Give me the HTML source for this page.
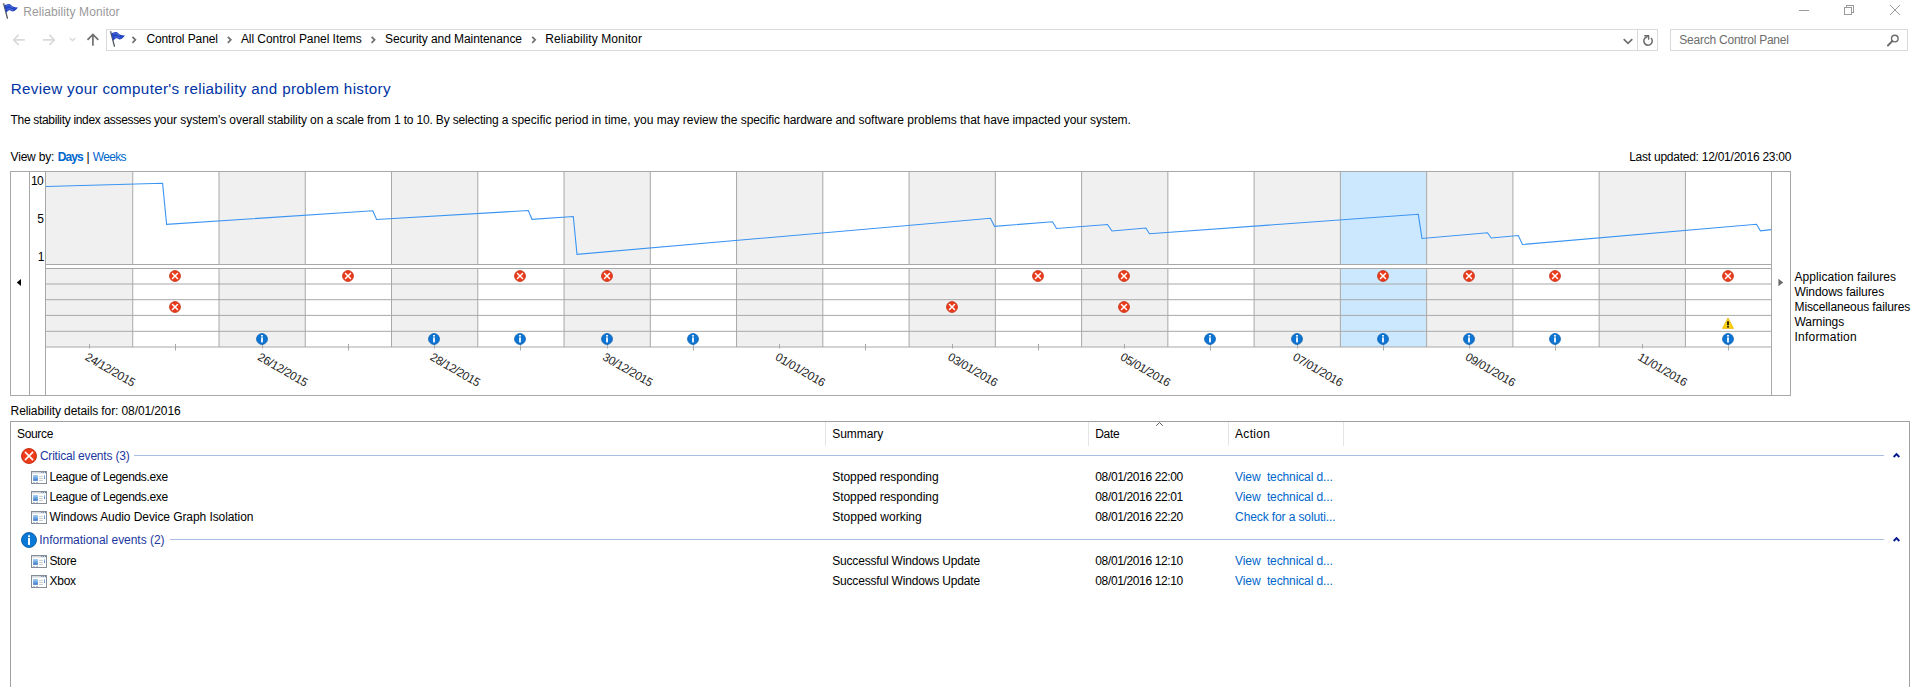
<!DOCTYPE html><html><head><meta charset="utf-8"><title>Reliability Monitor</title><style>
html,body{margin:0;padding:0;background:#fff;overflow:hidden;}
html{width:1918px;height:687px;}
body{width:1918px;height:687px;overflow:hidden;position:relative;font-family:"Liberation Sans", sans-serif;}
.abs{position:absolute;}
.t{position:absolute;white-space:pre;}
svg text{font-family:"Liberation Sans", sans-serif;}

</style></head><body>
<svg class="abs" style="left:0px;top:0px" width="20" height="20" viewBox="0 0 20 20"><path d="M3.8 4.3L7.4 18.2" stroke="#4d535b" stroke-width="1.3" stroke-linecap="round" fill="none"/><circle cx="3.7" cy="4.1" r="1.0" fill="#7d848c"/><path d="M4.3 5.3C5.8 4.7 7.4 3.8 9.0 4.0C10.6 4.2 11.4 5.8 12.8 6.4C14.4 7.0 16.2 7.2 17.9 7.5C17.2 8.6 16.4 9.6 15.4 10.3C14.6 10.9 13.8 11.5 12.8 11.5C11.6 11.5 10.8 10.3 9.6 10.3C8.2 10.3 7.0 11.8 6.2 12.8Z" fill="#2445c4"/><path d="M6.0 6.3C7.2 5.7 8.4 5.2 9.4 5.6C10.6 6.1 11.4 7.3 12.8 7.7" stroke="#5f7ddc" stroke-width="0.8" fill="none"/><path d="M7.0 9.6C8.2 8.8 9.2 8.6 10.4 9.0C11.4 9.4 12.2 10.0 13.4 9.9" stroke="#5f7ddc" stroke-width="0.8" fill="none"/></svg>
<svg class="abs" style="left:1790px;top:0" width="128" height="22" viewBox="0 0 128 22"><path d="M9 10.5H19" stroke="#9a9a9a" stroke-width="1" fill="none"/><path d="M54.5 7.5H61.5V14.5H54.5Z M56.5 7.5V5.5H63.5V12.5H61.5" stroke="#9a9a9a" stroke-width="1" fill="none" shape-rendering="crispEdges"/><path d="M100 5L110 15" stroke="#9a9a9a" stroke-width="1" fill="none"/><path d="M110 5L100 15" stroke="#9a9a9a" stroke-width="1" fill="none"/></svg>
<svg class="abs" style="left:0;top:28px" width="106" height="24" viewBox="0 0 106 24"><path d="M24.8 11.9H13.6M18.6 6.9L13.6 11.9L18.6 16.9" stroke="#d9d9d9" stroke-width="1.6" fill="none"/><path d="M43 11.9H54.4M49.4 6.9L54.4 11.9L49.4 16.9" stroke="#d9d9d9" stroke-width="1.6" fill="none"/><path d="M69.8 10L72.5 12.7L75.2 10" stroke="#d6d6d6" stroke-width="1.3" fill="none"/><path d="M92.9 17.8V6.9M87.5 11.9L92.9 6.5L98.3 11.9" stroke="#707070" stroke-width="1.7" fill="none"/></svg>
<div class="abs" style="left:106px;top:29px;width:1552px;height:22px;border:1px solid #d9d9d9;box-sizing:border-box;"></div>
<div class="abs" style="left:1637px;top:30px;width:1px;height:20px;background:#d9d9d9"></div>
<svg class="abs" style="left:106.5px;top:27.8px" width="20" height="20" viewBox="0 0 20 20"><path d="M3.8 4.3L7.4 18.2" stroke="#4d535b" stroke-width="1.3" stroke-linecap="round" fill="none"/><circle cx="3.7" cy="4.1" r="1.0" fill="#7d848c"/><path d="M4.3 5.3C5.8 4.7 7.4 3.8 9.0 4.0C10.6 4.2 11.4 5.8 12.8 6.4C14.4 7.0 16.2 7.2 17.9 7.5C17.2 8.6 16.4 9.6 15.4 10.3C14.6 10.9 13.8 11.5 12.8 11.5C11.6 11.5 10.8 10.3 9.6 10.3C8.2 10.3 7.0 11.8 6.2 12.8Z" fill="#2445c4"/><path d="M6.0 6.3C7.2 5.7 8.4 5.2 9.4 5.6C10.6 6.1 11.4 7.3 12.8 7.7" stroke="#5f7ddc" stroke-width="0.8" fill="none"/><path d="M7.0 9.6C8.2 8.8 9.2 8.6 10.4 9.0C11.4 9.4 12.2 10.0 13.4 9.9" stroke="#5f7ddc" stroke-width="0.8" fill="none"/></svg>
<svg class="abs" style="left:120px;top:28px" width="440" height="24" viewBox="120 0 440 24"><path d="M132.4 8.8L135.4 11.8L132.4 14.8" stroke="#707070" stroke-width="1.7" fill="none"/><path d="M227.8 8.8L230.8 11.8L227.8 14.8" stroke="#707070" stroke-width="1.7" fill="none"/><path d="M371.6 8.8L374.6 11.8L371.6 14.8" stroke="#707070" stroke-width="1.7" fill="none"/><path d="M532.2 8.8L535.2 11.8L532.2 14.8" stroke="#707070" stroke-width="1.7" fill="none"/></svg>
<svg class="abs" style="left:1618px;top:28px" width="44" height="24" viewBox="1618 28 44 24"><path d="M1623.7 39.1L1628.0 43.4L1632.3 39.1" stroke="#707070" stroke-width="1.7" fill="none"/><path d="M1651.0 38.0A4.2 4.2 0 1 1 1645.2 37.9L1647.6 36.4" stroke="#6b6b6b" stroke-width="1.5" fill="none"/><path d="M1644.2 35.7H1648.6V39.8" stroke="#6b6b6b" stroke-width="1.4" fill="none"/></svg>
<div class="abs" style="left:1670px;top:29px;width:238px;height:22px;border:1px solid #d9d9d9;box-sizing:border-box;"></div>
<svg class="abs" style="left:1884px;top:32px" width="18" height="18" viewBox="0 0 18 18"><circle cx="10.8" cy="6.6" r="3.3" stroke="#6b6b6b" stroke-width="1.4" fill="none"/><path d="M8.4 9L3.9 13.5" stroke="#6b6b6b" stroke-width="1.8" stroke-linecap="round" fill="none"/></svg>
<svg class="abs" style="left:0;top:0" width="1918" height="687" viewBox="0 0 1918 687">
<rect x="10.5" y="171.5" width="1780" height="224" fill="#fff" stroke="#a8a8a8" stroke-width="1"/>
<rect x="46.00" y="172" width="86.26" height="92.5" fill="#f0f0f0"/>
<rect x="46.00" y="268.5" width="86.26" height="78.5" fill="#f0f0f0"/>
<rect x="219.00" y="172" width="86.26" height="92.5" fill="#f0f0f0"/>
<rect x="219.00" y="268.5" width="86.26" height="78.5" fill="#f0f0f0"/>
<rect x="391.52" y="172" width="86.26" height="92.5" fill="#f0f0f0"/>
<rect x="391.52" y="268.5" width="86.26" height="78.5" fill="#f0f0f0"/>
<rect x="564.04" y="172" width="86.26" height="92.5" fill="#f0f0f0"/>
<rect x="564.04" y="268.5" width="86.26" height="78.5" fill="#f0f0f0"/>
<rect x="736.56" y="172" width="86.26" height="92.5" fill="#f0f0f0"/>
<rect x="736.56" y="268.5" width="86.26" height="78.5" fill="#f0f0f0"/>
<rect x="909.08" y="172" width="86.26" height="92.5" fill="#f0f0f0"/>
<rect x="909.08" y="268.5" width="86.26" height="78.5" fill="#f0f0f0"/>
<rect x="1081.60" y="172" width="86.26" height="92.5" fill="#f0f0f0"/>
<rect x="1081.60" y="268.5" width="86.26" height="78.5" fill="#f0f0f0"/>
<rect x="1254.12" y="172" width="86.26" height="92.5" fill="#f0f0f0"/>
<rect x="1254.12" y="268.5" width="86.26" height="78.5" fill="#f0f0f0"/>
<rect x="1340.38" y="172" width="86.26" height="92.5" fill="#cce8ff"/>
<rect x="1340.38" y="268.5" width="86.26" height="78.5" fill="#cce8ff"/>
<rect x="1426.64" y="172" width="86.26" height="92.5" fill="#f0f0f0"/>
<rect x="1426.64" y="268.5" width="86.26" height="78.5" fill="#f0f0f0"/>
<rect x="1599.16" y="172" width="86.26" height="92.5" fill="#f0f0f0"/>
<rect x="1599.16" y="268.5" width="86.26" height="78.5" fill="#f0f0f0"/>
<path d="M132.74 172V264.5M132.74 268.5V347" stroke="#a8a8a8" stroke-width="1" fill="none"/>
<path d="M219.00 172V264.5M219.00 268.5V347" stroke="#a8a8a8" stroke-width="1" fill="none"/>
<path d="M305.26 172V264.5M305.26 268.5V347" stroke="#a8a8a8" stroke-width="1" fill="none"/>
<path d="M391.52 172V264.5M391.52 268.5V347" stroke="#a8a8a8" stroke-width="1" fill="none"/>
<path d="M477.78 172V264.5M477.78 268.5V347" stroke="#a8a8a8" stroke-width="1" fill="none"/>
<path d="M564.04 172V264.5M564.04 268.5V347" stroke="#a8a8a8" stroke-width="1" fill="none"/>
<path d="M650.30 172V264.5M650.30 268.5V347" stroke="#a8a8a8" stroke-width="1" fill="none"/>
<path d="M736.56 172V264.5M736.56 268.5V347" stroke="#a8a8a8" stroke-width="1" fill="none"/>
<path d="M822.82 172V264.5M822.82 268.5V347" stroke="#a8a8a8" stroke-width="1" fill="none"/>
<path d="M909.08 172V264.5M909.08 268.5V347" stroke="#a8a8a8" stroke-width="1" fill="none"/>
<path d="M995.34 172V264.5M995.34 268.5V347" stroke="#a8a8a8" stroke-width="1" fill="none"/>
<path d="M1081.60 172V264.5M1081.60 268.5V347" stroke="#a8a8a8" stroke-width="1" fill="none"/>
<path d="M1167.86 172V264.5M1167.86 268.5V347" stroke="#a8a8a8" stroke-width="1" fill="none"/>
<path d="M1254.12 172V264.5M1254.12 268.5V347" stroke="#a8a8a8" stroke-width="1" fill="none"/>
<path d="M1340.38 172V264.5M1340.38 268.5V347" stroke="#a8a8a8" stroke-width="1" fill="none"/>
<path d="M1426.64 172V264.5M1426.64 268.5V347" stroke="#a8a8a8" stroke-width="1" fill="none"/>
<path d="M1512.90 172V264.5M1512.90 268.5V347" stroke="#a8a8a8" stroke-width="1" fill="none"/>
<path d="M1599.16 172V264.5M1599.16 268.5V347" stroke="#a8a8a8" stroke-width="1" fill="none"/>
<path d="M1685.42 172V264.5M1685.42 268.5V347" stroke="#a8a8a8" stroke-width="1" fill="none"/>
<path d="M29.5 172V395" stroke="#a8a8a8" stroke-width="1" fill="none"/>
<path d="M45.5 172V395" stroke="#a8a8a8" stroke-width="1" fill="none"/>
<path d="M1771.5 172V395" stroke="#a8a8a8" stroke-width="1" fill="none"/>
<path d="M45.5 264.5H1771.5" stroke="#a8a8a8" stroke-width="1" fill="none"/>
<path d="M45.5 268.5H1771.5" stroke="#a8a8a8" stroke-width="1" fill="none"/>
<path d="M45.5 284.0H1771.5" stroke="#a8a8a8" stroke-width="1" fill="none"/>
<path d="M45.5 299.7H1771.5" stroke="#a8a8a8" stroke-width="1" fill="none"/>
<path d="M45.5 315.4H1771.5" stroke="#a8a8a8" stroke-width="1" fill="none"/>
<path d="M45.5 331.3H1771.5" stroke="#a8a8a8" stroke-width="1" fill="none"/>
<path d="M45.5 347.0H1771.5" stroke="#a8a8a8" stroke-width="1" fill="none"/>
<path d="M89.50 344V348.5" stroke="#a8a8a8" stroke-width="1" fill="none"/>
<path d="M175.50 344V350.5" stroke="#a8a8a8" stroke-width="1" fill="none"/>
<path d="M262.50 344V348.5" stroke="#a8a8a8" stroke-width="1" fill="none"/>
<path d="M348.50 344V350.5" stroke="#a8a8a8" stroke-width="1" fill="none"/>
<path d="M434.50 344V348.5" stroke="#a8a8a8" stroke-width="1" fill="none"/>
<path d="M520.50 344V350.5" stroke="#a8a8a8" stroke-width="1" fill="none"/>
<path d="M607.50 344V348.5" stroke="#a8a8a8" stroke-width="1" fill="none"/>
<path d="M693.50 344V350.5" stroke="#a8a8a8" stroke-width="1" fill="none"/>
<path d="M779.50 344V348.5" stroke="#a8a8a8" stroke-width="1" fill="none"/>
<path d="M865.50 344V350.5" stroke="#a8a8a8" stroke-width="1" fill="none"/>
<path d="M952.50 344V348.5" stroke="#a8a8a8" stroke-width="1" fill="none"/>
<path d="M1038.50 344V350.5" stroke="#a8a8a8" stroke-width="1" fill="none"/>
<path d="M1124.50 344V348.5" stroke="#a8a8a8" stroke-width="1" fill="none"/>
<path d="M1210.50 344V350.5" stroke="#a8a8a8" stroke-width="1" fill="none"/>
<path d="M1297.50 344V348.5" stroke="#a8a8a8" stroke-width="1" fill="none"/>
<path d="M1383.50 344V350.5" stroke="#a8a8a8" stroke-width="1" fill="none"/>
<path d="M1469.50 344V348.5" stroke="#a8a8a8" stroke-width="1" fill="none"/>
<path d="M1555.50 344V350.5" stroke="#a8a8a8" stroke-width="1" fill="none"/>
<path d="M1642.50 344V348.5" stroke="#a8a8a8" stroke-width="1" fill="none"/>
<path d="M1728.50 344V350.5" stroke="#a8a8a8" stroke-width="1" fill="none"/>
<polyline points="46,186.5 162.6,183.3 166.6,224.3 372.8,210.8 376.6,219.5 528.3,210.5 532,219.3 573.3,216.5 577,254.3 990.5,218.3 994.5,226.3 1052.5,221.8 1056.5,228.5 1107.5,224.5 1112,231 1145.8,228 1149.5,233.8 1418.3,214.3 1422,238.5 1487.5,232.8 1491.3,238 1518.3,235.5 1522.5,244.5 1756.5,224.3 1760.4,230.8 1771,229.6" fill="none" stroke="#3a94f2" stroke-width="1.1" stroke-linejoin="miter"/>
<path d="M16.8 282.5L21 279V286Z" fill="#000"/>
<path d="M1783.2 282.5L1778.4 278.8V286.2Z" fill="#6a6a6a"/>
<g transform="translate(175.00 276)"><circle r="5.45" fill="#ea3b1c" stroke="#c42d10" stroke-width="0.8"/><path d="M-2.5 -2.5L2.5 2.5" stroke="#fff" stroke-width="1.45" stroke-linecap="round"/><path d="M2.5 -2.5L-2.5 2.5" stroke="#fff" stroke-width="1.45" stroke-linecap="round"/></g>
<g transform="translate(348.00 276)"><circle r="5.45" fill="#ea3b1c" stroke="#c42d10" stroke-width="0.8"/><path d="M-2.5 -2.5L2.5 2.5" stroke="#fff" stroke-width="1.45" stroke-linecap="round"/><path d="M2.5 -2.5L-2.5 2.5" stroke="#fff" stroke-width="1.45" stroke-linecap="round"/></g>
<g transform="translate(520.00 276)"><circle r="5.45" fill="#ea3b1c" stroke="#c42d10" stroke-width="0.8"/><path d="M-2.5 -2.5L2.5 2.5" stroke="#fff" stroke-width="1.45" stroke-linecap="round"/><path d="M2.5 -2.5L-2.5 2.5" stroke="#fff" stroke-width="1.45" stroke-linecap="round"/></g>
<g transform="translate(607.00 276)"><circle r="5.45" fill="#ea3b1c" stroke="#c42d10" stroke-width="0.8"/><path d="M-2.5 -2.5L2.5 2.5" stroke="#fff" stroke-width="1.45" stroke-linecap="round"/><path d="M2.5 -2.5L-2.5 2.5" stroke="#fff" stroke-width="1.45" stroke-linecap="round"/></g>
<g transform="translate(1038.00 276)"><circle r="5.45" fill="#ea3b1c" stroke="#c42d10" stroke-width="0.8"/><path d="M-2.5 -2.5L2.5 2.5" stroke="#fff" stroke-width="1.45" stroke-linecap="round"/><path d="M2.5 -2.5L-2.5 2.5" stroke="#fff" stroke-width="1.45" stroke-linecap="round"/></g>
<g transform="translate(1124.00 276)"><circle r="5.45" fill="#ea3b1c" stroke="#c42d10" stroke-width="0.8"/><path d="M-2.5 -2.5L2.5 2.5" stroke="#fff" stroke-width="1.45" stroke-linecap="round"/><path d="M2.5 -2.5L-2.5 2.5" stroke="#fff" stroke-width="1.45" stroke-linecap="round"/></g>
<g transform="translate(1383.00 276)"><circle r="5.45" fill="#ea3b1c" stroke="#c42d10" stroke-width="0.8"/><path d="M-2.5 -2.5L2.5 2.5" stroke="#fff" stroke-width="1.45" stroke-linecap="round"/><path d="M2.5 -2.5L-2.5 2.5" stroke="#fff" stroke-width="1.45" stroke-linecap="round"/></g>
<g transform="translate(1469.00 276)"><circle r="5.45" fill="#ea3b1c" stroke="#c42d10" stroke-width="0.8"/><path d="M-2.5 -2.5L2.5 2.5" stroke="#fff" stroke-width="1.45" stroke-linecap="round"/><path d="M2.5 -2.5L-2.5 2.5" stroke="#fff" stroke-width="1.45" stroke-linecap="round"/></g>
<g transform="translate(1555.00 276)"><circle r="5.45" fill="#ea3b1c" stroke="#c42d10" stroke-width="0.8"/><path d="M-2.5 -2.5L2.5 2.5" stroke="#fff" stroke-width="1.45" stroke-linecap="round"/><path d="M2.5 -2.5L-2.5 2.5" stroke="#fff" stroke-width="1.45" stroke-linecap="round"/></g>
<g transform="translate(1728.00 276)"><circle r="5.45" fill="#ea3b1c" stroke="#c42d10" stroke-width="0.8"/><path d="M-2.5 -2.5L2.5 2.5" stroke="#fff" stroke-width="1.45" stroke-linecap="round"/><path d="M2.5 -2.5L-2.5 2.5" stroke="#fff" stroke-width="1.45" stroke-linecap="round"/></g>
<g transform="translate(175.00 307)"><circle r="5.45" fill="#ea3b1c" stroke="#c42d10" stroke-width="0.8"/><path d="M-2.5 -2.5L2.5 2.5" stroke="#fff" stroke-width="1.45" stroke-linecap="round"/><path d="M2.5 -2.5L-2.5 2.5" stroke="#fff" stroke-width="1.45" stroke-linecap="round"/></g>
<g transform="translate(952.00 307)"><circle r="5.45" fill="#ea3b1c" stroke="#c42d10" stroke-width="0.8"/><path d="M-2.5 -2.5L2.5 2.5" stroke="#fff" stroke-width="1.45" stroke-linecap="round"/><path d="M2.5 -2.5L-2.5 2.5" stroke="#fff" stroke-width="1.45" stroke-linecap="round"/></g>
<g transform="translate(1124.00 307)"><circle r="5.45" fill="#ea3b1c" stroke="#c42d10" stroke-width="0.8"/><path d="M-2.5 -2.5L2.5 2.5" stroke="#fff" stroke-width="1.45" stroke-linecap="round"/><path d="M2.5 -2.5L-2.5 2.5" stroke="#fff" stroke-width="1.45" stroke-linecap="round"/></g>
<g transform="translate(1728.00 323.5)"><path d="M0 -5.6L5.6 4.9H-5.6Z" fill="#fcd116" stroke="#e4b400" stroke-width="0.7" stroke-linejoin="round"/><rect x="-0.8" y="-2.2" width="1.6" height="4" fill="#000"/><rect x="-0.8" y="2.6" width="1.6" height="1.5" fill="#000"/></g>
<g transform="translate(262.00 339)"><circle r="5.45" fill="#0d74d2" stroke="#0a5fb4" stroke-width="0.8"/><rect x="-0.9" y="-1.6" width="1.8" height="5" fill="#fff"/><rect x="-0.9" y="-4" width="1.8" height="1.6" fill="#fff"/></g>
<g transform="translate(434.00 339)"><circle r="5.45" fill="#0d74d2" stroke="#0a5fb4" stroke-width="0.8"/><rect x="-0.9" y="-1.6" width="1.8" height="5" fill="#fff"/><rect x="-0.9" y="-4" width="1.8" height="1.6" fill="#fff"/></g>
<g transform="translate(520.00 339)"><circle r="5.45" fill="#0d74d2" stroke="#0a5fb4" stroke-width="0.8"/><rect x="-0.9" y="-1.6" width="1.8" height="5" fill="#fff"/><rect x="-0.9" y="-4" width="1.8" height="1.6" fill="#fff"/></g>
<g transform="translate(607.00 339)"><circle r="5.45" fill="#0d74d2" stroke="#0a5fb4" stroke-width="0.8"/><rect x="-0.9" y="-1.6" width="1.8" height="5" fill="#fff"/><rect x="-0.9" y="-4" width="1.8" height="1.6" fill="#fff"/></g>
<g transform="translate(693.00 339)"><circle r="5.45" fill="#0d74d2" stroke="#0a5fb4" stroke-width="0.8"/><rect x="-0.9" y="-1.6" width="1.8" height="5" fill="#fff"/><rect x="-0.9" y="-4" width="1.8" height="1.6" fill="#fff"/></g>
<g transform="translate(1210.00 339)"><circle r="5.45" fill="#0d74d2" stroke="#0a5fb4" stroke-width="0.8"/><rect x="-0.9" y="-1.6" width="1.8" height="5" fill="#fff"/><rect x="-0.9" y="-4" width="1.8" height="1.6" fill="#fff"/></g>
<g transform="translate(1297.00 339)"><circle r="5.45" fill="#0d74d2" stroke="#0a5fb4" stroke-width="0.8"/><rect x="-0.9" y="-1.6" width="1.8" height="5" fill="#fff"/><rect x="-0.9" y="-4" width="1.8" height="1.6" fill="#fff"/></g>
<g transform="translate(1383.00 339)"><circle r="5.45" fill="#0d74d2" stroke="#0a5fb4" stroke-width="0.8"/><rect x="-0.9" y="-1.6" width="1.8" height="5" fill="#fff"/><rect x="-0.9" y="-4" width="1.8" height="1.6" fill="#fff"/></g>
<g transform="translate(1469.00 339)"><circle r="5.45" fill="#0d74d2" stroke="#0a5fb4" stroke-width="0.8"/><rect x="-0.9" y="-1.6" width="1.8" height="5" fill="#fff"/><rect x="-0.9" y="-4" width="1.8" height="1.6" fill="#fff"/></g>
<g transform="translate(1555.00 339)"><circle r="5.45" fill="#0d74d2" stroke="#0a5fb4" stroke-width="0.8"/><rect x="-0.9" y="-1.6" width="1.8" height="5" fill="#fff"/><rect x="-0.9" y="-4" width="1.8" height="1.6" fill="#fff"/></g>
<g transform="translate(1728.00 339)"><circle r="5.45" fill="#0d74d2" stroke="#0a5fb4" stroke-width="0.8"/><rect x="-0.9" y="-1.6" width="1.8" height="5" fill="#fff"/><rect x="-0.9" y="-4" width="1.8" height="1.6" fill="#fff"/></g>
<text x="0" y="0" transform="translate(84.31 359.3) rotate(30)" font-size="11.7" letter-spacing="-0.33" fill="#1c1c1c">24/12/2015</text>
<text x="0" y="0" transform="translate(256.83 359.3) rotate(30)" font-size="11.7" letter-spacing="-0.33" fill="#1c1c1c">26/12/2015</text>
<text x="0" y="0" transform="translate(429.35 359.3) rotate(30)" font-size="11.7" letter-spacing="-0.33" fill="#1c1c1c">28/12/2015</text>
<text x="0" y="0" transform="translate(601.87 359.3) rotate(30)" font-size="11.7" letter-spacing="-0.33" fill="#1c1c1c">30/12/2015</text>
<text x="0" y="0" transform="translate(774.39 359.3) rotate(30)" font-size="11.7" letter-spacing="-0.33" fill="#1c1c1c">01/01/2016</text>
<text x="0" y="0" transform="translate(946.91 359.3) rotate(30)" font-size="11.7" letter-spacing="-0.33" fill="#1c1c1c">03/01/2016</text>
<text x="0" y="0" transform="translate(1119.43 359.3) rotate(30)" font-size="11.7" letter-spacing="-0.33" fill="#1c1c1c">05/01/2016</text>
<text x="0" y="0" transform="translate(1291.95 359.3) rotate(30)" font-size="11.7" letter-spacing="-0.33" fill="#1c1c1c">07/01/2016</text>
<text x="0" y="0" transform="translate(1464.47 359.3) rotate(30)" font-size="11.7" letter-spacing="-0.33" fill="#1c1c1c">09/01/2016</text>
<text x="0" y="0" transform="translate(1636.99 359.3) rotate(30)" font-size="11.7" letter-spacing="-0.33" fill="#1c1c1c">11/01/2016</text>
</svg>
<div class="abs" style="left:10px;top:421px;width:1900px;height:266px;border:1px solid #a0a0a0;border-bottom:0;box-sizing:border-box;"></div>
<div class="abs" style="left:825px;top:422px;width:1px;height:24px;background:#e5e5e5"></div>
<div class="abs" style="left:1088px;top:422px;width:1px;height:24px;background:#e5e5e5"></div>
<div class="abs" style="left:1228px;top:422px;width:1px;height:24px;background:#e5e5e5"></div>
<div class="abs" style="left:1343px;top:422px;width:1px;height:24px;background:#e5e5e5"></div>
<svg class="abs" style="left:1154px;top:421px" width="12" height="8" viewBox="0 0 12 8"><path d="M2.2 4.8L5.5 1.5L8.8 4.8" stroke="#5a5a5a" stroke-width="1" fill="none"/></svg>
<div class="abs" style="left:134px;top:455px;width:1750px;height:1px;background:#a9bde4"></div>
<div class="abs" style="left:170px;top:539px;width:1714px;height:1px;background:#a9bde4"></div>
<svg class="abs" style="left:1891px;top:451px" width="12" height="8" viewBox="0 0 12 8"><path d="M2.7 6L5.5 3.2L8.3 6" stroke="#00168c" stroke-width="1.9" fill="none"/></svg>
<svg class="abs" style="left:1891px;top:535px" width="12" height="8" viewBox="0 0 12 8"><path d="M2.7 6L5.5 3.2L8.3 6" stroke="#00168c" stroke-width="1.9" fill="none"/></svg>
<svg class="abs" style="left:20px;top:447px" width="18" height="18" viewBox="0 0 18 18"><circle cx="9.0" cy="9.0" r="7.5" fill="#ee3b1a" stroke="#bf2a0e" stroke-width="0.9"/><path d="M5.4 5.4L12.6 12.6" stroke="#fff" stroke-width="1.6" stroke-linecap="round"/><path d="M12.6 5.4L5.4 12.6" stroke="#fff" stroke-width="1.6" stroke-linecap="round"/></svg>
<svg class="abs" style="left:20px;top:531px" width="18" height="18" viewBox="0 0 18 18"><circle cx="9" cy="9" r="7.5" fill="#0a78d6" stroke="#075b9f" stroke-width="0.9"/><rect x="8" y="6.9" width="2" height="7" fill="#fff"/><rect x="8" y="4.3" width="2" height="1.8" fill="#fff"/></svg>
<svg class="abs" style="left:31px;top:471.2px" width="16" height="13" viewBox="0 0 16 13"><defs><linearGradient id="agb" x1="0" y1="0" x2="0" y2="1"><stop offset="0" stop-color="#a3d3f2"/><stop offset="0.8" stop-color="#4f8ad4"/><stop offset="1" stop-color="#3a6fbd"/></linearGradient></defs><rect x="0.5" y="0.5" width="15" height="12" fill="#fefefe" stroke="#878d94"/><rect x="1" y="1" width="14" height="1.5" fill="#d3d8dd"/><path d="M10.2 1.5H11.2M12.1 1.5H13.1M14 1.5H15" stroke="#6482ad" stroke-width="1"/><rect x="2.1" y="4" width="4.8" height="5.8" fill="url(#agb)"/><path d="M8.1 5.4H11.9M8.1 7.5H11.9M8.1 9.5H11.9" stroke="#c6cacf" stroke-width="1"/><rect x="13" y="4" width="1" height="3.9" fill="url(#agb)"/><path d="M2.2 11.4H3.8M5.3 11.4H6.9" stroke="#93a7c4" stroke-width="0.9"/></svg>
<svg class="abs" style="left:31px;top:491.1px" width="16" height="13" viewBox="0 0 16 13"><defs><linearGradient id="agb" x1="0" y1="0" x2="0" y2="1"><stop offset="0" stop-color="#a3d3f2"/><stop offset="0.8" stop-color="#4f8ad4"/><stop offset="1" stop-color="#3a6fbd"/></linearGradient></defs><rect x="0.5" y="0.5" width="15" height="12" fill="#fefefe" stroke="#878d94"/><rect x="1" y="1" width="14" height="1.5" fill="#d3d8dd"/><path d="M10.2 1.5H11.2M12.1 1.5H13.1M14 1.5H15" stroke="#6482ad" stroke-width="1"/><rect x="2.1" y="4" width="4.8" height="5.8" fill="url(#agb)"/><path d="M8.1 5.4H11.9M8.1 7.5H11.9M8.1 9.5H11.9" stroke="#c6cacf" stroke-width="1"/><rect x="13" y="4" width="1" height="3.9" fill="url(#agb)"/><path d="M2.2 11.4H3.8M5.3 11.4H6.9" stroke="#93a7c4" stroke-width="0.9"/></svg>
<svg class="abs" style="left:31px;top:510.9px" width="16" height="13" viewBox="0 0 16 13"><defs><linearGradient id="agb" x1="0" y1="0" x2="0" y2="1"><stop offset="0" stop-color="#a3d3f2"/><stop offset="0.8" stop-color="#4f8ad4"/><stop offset="1" stop-color="#3a6fbd"/></linearGradient></defs><rect x="0.5" y="0.5" width="15" height="12" fill="#fefefe" stroke="#878d94"/><rect x="1" y="1" width="14" height="1.5" fill="#d3d8dd"/><path d="M10.2 1.5H11.2M12.1 1.5H13.1M14 1.5H15" stroke="#6482ad" stroke-width="1"/><rect x="2.1" y="4" width="4.8" height="5.8" fill="url(#agb)"/><path d="M8.1 5.4H11.9M8.1 7.5H11.9M8.1 9.5H11.9" stroke="#c6cacf" stroke-width="1"/><rect x="13" y="4" width="1" height="3.9" fill="url(#agb)"/><path d="M2.2 11.4H3.8M5.3 11.4H6.9" stroke="#93a7c4" stroke-width="0.9"/></svg>
<svg class="abs" style="left:31px;top:555.0px" width="16" height="13" viewBox="0 0 16 13"><defs><linearGradient id="agb" x1="0" y1="0" x2="0" y2="1"><stop offset="0" stop-color="#a3d3f2"/><stop offset="0.8" stop-color="#4f8ad4"/><stop offset="1" stop-color="#3a6fbd"/></linearGradient></defs><rect x="0.5" y="0.5" width="15" height="12" fill="#fefefe" stroke="#878d94"/><rect x="1" y="1" width="14" height="1.5" fill="#d3d8dd"/><path d="M10.2 1.5H11.2M12.1 1.5H13.1M14 1.5H15" stroke="#6482ad" stroke-width="1"/><rect x="2.1" y="4" width="4.8" height="5.8" fill="url(#agb)"/><path d="M8.1 5.4H11.9M8.1 7.5H11.9M8.1 9.5H11.9" stroke="#c6cacf" stroke-width="1"/><rect x="13" y="4" width="1" height="3.9" fill="url(#agb)"/><path d="M2.2 11.4H3.8M5.3 11.4H6.9" stroke="#93a7c4" stroke-width="0.9"/></svg>
<svg class="abs" style="left:31px;top:575.1px" width="16" height="13" viewBox="0 0 16 13"><defs><linearGradient id="agb" x1="0" y1="0" x2="0" y2="1"><stop offset="0" stop-color="#a3d3f2"/><stop offset="0.8" stop-color="#4f8ad4"/><stop offset="1" stop-color="#3a6fbd"/></linearGradient></defs><rect x="0.5" y="0.5" width="15" height="12" fill="#fefefe" stroke="#878d94"/><rect x="1" y="1" width="14" height="1.5" fill="#d3d8dd"/><path d="M10.2 1.5H11.2M12.1 1.5H13.1M14 1.5H15" stroke="#6482ad" stroke-width="1"/><rect x="2.1" y="4" width="4.8" height="5.8" fill="url(#agb)"/><path d="M8.1 5.4H11.9M8.1 7.5H11.9M8.1 9.5H11.9" stroke="#c6cacf" stroke-width="1"/><rect x="13" y="4" width="1" height="3.9" fill="url(#agb)"/><path d="M2.2 11.4H3.8M5.3 11.4H6.9" stroke="#93a7c4" stroke-width="0.9"/></svg>
<span class="t" id="title" style="left:23.30px;top:4.53px;font-size:12px;line-height:15px;color:#9a9a9a;letter-spacing:0.089px;">Reliability Monitor</span>
<span class="t" id="cp" style="left:146.40px;top:32.03px;font-size:12px;line-height:15px;color:#000;letter-spacing:-0.094px;">Control Panel</span>
<span class="t" id="acpi" style="left:240.90px;top:32.03px;font-size:12px;line-height:15px;color:#000;letter-spacing:-0.055px;">All Control Panel Items</span>
<span class="t" id="sm" style="left:385.00px;top:32.03px;font-size:12px;line-height:15px;color:#000;letter-spacing:-0.077px;">Security and Maintenance</span>
<span class="t" id="rm" style="left:545.30px;top:32.03px;font-size:12px;line-height:15px;color:#000;letter-spacing:0.105px;">Reliability Monitor</span>
<span class="t" id="search" style="left:1679.30px;top:33.33px;font-size:12px;line-height:15px;color:#6d6d6d;letter-spacing:-0.234px;">Search Control Panel</span>
<span class="t" id="h1" style="left:10.70px;top:79.28px;font-size:15.2px;line-height:19px;color:#0034a4;letter-spacing:0.328px;">Review your computer's reliability and problem history</span>
<span class="t" id="para0" style="left:10.60px;top:112.83px;font-size:12px;line-height:15px;color:#000;letter-spacing:-0.326px;">The stability index assesses </span>
<span class="t" id="para1" style="left:153.90px;top:112.83px;font-size:12px;line-height:15px;color:#000;letter-spacing:-0.059px;">your system's overall </span>
<span class="t" id="para2" style="left:267.60px;top:112.83px;font-size:12px;line-height:15px;color:#000;letter-spacing:-0.089px;">stability on a scale from </span>
<span class="t" id="para3" style="left:394.00px;top:112.83px;font-size:12px;line-height:15px;color:#000;letter-spacing:-0.167px;">1 to 10. By selecting a </span>
<span class="t" id="para4" style="left:511.40px;top:112.83px;font-size:12px;line-height:15px;color:#000;letter-spacing:0.022px;">specific period in time, </span>
<span class="t" id="para5" style="left:634.00px;top:112.83px;font-size:12px;line-height:15px;color:#000;letter-spacing:0.004px;">you may review the </span>
<span class="t" id="para6" style="left:740.80px;top:112.83px;font-size:12px;line-height:15px;color:#000;letter-spacing:-0.113px;">specific hardware and </span>
<span class="t" id="para7" style="left:858.40px;top:112.83px;font-size:12px;line-height:15px;color:#000;letter-spacing:0.020px;">software problems that </span>
<span class="t" id="para8" style="left:983.60px;top:112.83px;font-size:12px;line-height:15px;color:#000;letter-spacing:-0.085px;">have impacted your system.</span>
<span class="t" id="viewby" style="left:10.60px;top:149.53px;font-size:12px;line-height:15px;color:#000;letter-spacing:-0.205px;">View by:</span>
<span class="t" id="days" style="left:57.70px;top:149.53px;font-size:12px;line-height:15px;color:#0066cc;font-weight:bold;letter-spacing:-0.897px;">Days</span>
<span class="t" id="bar" style="left:86.50px;top:149.53px;font-size:12px;line-height:15px;color:#000;">|</span>
<span class="t" id="weeks" style="left:92.70px;top:149.53px;font-size:12px;line-height:15px;color:#0066cc;letter-spacing:-0.634px;">Weeks</span>
<span class="t" id="lastupd" style="left:1629.20px;top:149.53px;font-size:12px;line-height:15px;color:#000;letter-spacing:-0.249px;">Last updated: 12/01/2016 23:00</span>
<span class="t" id="y10" style="left:31.00px;top:173.53px;font-size:12px;line-height:15px;color:#000;letter-spacing:-0.680px;">10</span>
<span class="t" id="y5" style="left:37.30px;top:211.93px;font-size:12px;line-height:15px;color:#000;">5</span>
<span class="t" id="y1" style="left:37.80px;top:249.83px;font-size:12px;line-height:15px;color:#000;">1</span>
<span class="t" id="leg0" style="left:1794.50px;top:269.93px;font-size:12px;line-height:15px;color:#000;letter-spacing:0.043px;">Application failures</span>
<span class="t" id="leg1" style="left:1794.50px;top:284.93px;font-size:12px;line-height:15px;color:#000;letter-spacing:-0.069px;">Windows failures</span>
<span class="t" id="leg2" style="left:1794.50px;top:299.93px;font-size:12px;line-height:15px;color:#000;letter-spacing:-0.107px;">Miscellaneous failures</span>
<span class="t" id="leg3" style="left:1794.50px;top:314.93px;font-size:12px;line-height:15px;color:#000;letter-spacing:-0.081px;">Warnings</span>
<span class="t" id="leg4" style="left:1794.50px;top:329.93px;font-size:12px;line-height:15px;color:#000;letter-spacing:0.215px;">Information</span>
<span class="t" id="reldet" style="left:10.60px;top:403.53px;font-size:12px;line-height:15px;color:#000;letter-spacing:-0.098px;">Reliability details for: 08/01/2016</span>
<span class="t" id="hsrc" style="left:17.00px;top:426.53px;font-size:12px;line-height:15px;color:#000;letter-spacing:-0.339px;">Source</span>
<span class="t" id="hsum" style="left:832.20px;top:426.53px;font-size:12px;line-height:15px;color:#000;letter-spacing:-0.049px;">Summary</span>
<span class="t" id="hdate" style="left:1095.30px;top:426.53px;font-size:12px;line-height:15px;color:#000;letter-spacing:-0.340px;">Date</span>
<span class="t" id="hact" style="left:1235.10px;top:426.53px;font-size:12px;line-height:15px;color:#000;letter-spacing:0.273px;">Action</span>
<span class="t" id="crit" style="left:39.90px;top:448.53px;font-size:12px;line-height:15px;color:#1c38a0;letter-spacing:-0.198px;">Critical events (3)</span>
<span class="t" id="info" style="left:39.30px;top:532.53px;font-size:12px;line-height:15px;color:#1c38a0;letter-spacing:-0.036px;">Informational events (2)</span>
<span class="t" id="r0s" style="left:49.40px;top:469.93px;font-size:12px;line-height:15px;color:#000;letter-spacing:-0.331px;">League of Legends.exe</span>
<span class="t" id="r0m" style="left:832.20px;top:469.93px;font-size:12px;line-height:15px;color:#000;letter-spacing:-0.057px;">Stopped responding</span>
<span class="t" id="r0d" style="left:1095.30px;top:469.93px;font-size:12px;line-height:15px;color:#000;letter-spacing:-0.364px;">08/01/2016 22:00</span>
<span class="t" id="r0a" style="left:1235.10px;top:469.93px;font-size:12px;line-height:15px;color:#0066cc;letter-spacing:-0.112px;">View  technical d...</span>
<span class="t" id="r1s" style="left:49.40px;top:489.83px;font-size:12px;line-height:15px;color:#000;letter-spacing:-0.331px;">League of Legends.exe</span>
<span class="t" id="r1m" style="left:832.20px;top:489.83px;font-size:12px;line-height:15px;color:#000;letter-spacing:-0.057px;">Stopped responding</span>
<span class="t" id="r1d" style="left:1095.30px;top:489.83px;font-size:12px;line-height:15px;color:#000;letter-spacing:-0.364px;">08/01/2016 22:01</span>
<span class="t" id="r1a" style="left:1235.10px;top:489.83px;font-size:12px;line-height:15px;color:#0066cc;letter-spacing:-0.112px;">View  technical d...</span>
<span class="t" id="r2s" style="left:49.40px;top:509.63px;font-size:12px;line-height:15px;color:#000;letter-spacing:-0.077px;">Windows Audio Device Graph Isolation</span>
<span class="t" id="r2m" style="left:832.20px;top:509.63px;font-size:12px;line-height:15px;color:#000;letter-spacing:0.007px;">Stopped working</span>
<span class="t" id="r2d" style="left:1095.30px;top:509.63px;font-size:12px;line-height:15px;color:#000;letter-spacing:-0.364px;">08/01/2016 22:20</span>
<span class="t" id="r2a" style="left:1235.10px;top:509.63px;font-size:12px;line-height:15px;color:#0066cc;letter-spacing:-0.110px;">Check for a soluti...</span>
<span class="t" id="r3s" style="left:49.40px;top:553.73px;font-size:12px;line-height:15px;color:#000;letter-spacing:-0.338px;">Store</span>
<span class="t" id="r3m" style="left:832.20px;top:553.73px;font-size:12px;line-height:15px;color:#000;letter-spacing:-0.175px;">Successful Windows Update</span>
<span class="t" id="r3d" style="left:1095.30px;top:553.73px;font-size:12px;line-height:15px;color:#000;letter-spacing:-0.364px;">08/01/2016 12:10</span>
<span class="t" id="r3a" style="left:1235.10px;top:553.73px;font-size:12px;line-height:15px;color:#0066cc;letter-spacing:-0.112px;">View  technical d...</span>
<span class="t" id="r4s" style="left:49.40px;top:573.83px;font-size:12px;line-height:15px;color:#000;letter-spacing:-0.215px;">Xbox</span>
<span class="t" id="r4m" style="left:832.20px;top:573.83px;font-size:12px;line-height:15px;color:#000;letter-spacing:-0.175px;">Successful Windows Update</span>
<span class="t" id="r4d" style="left:1095.30px;top:573.83px;font-size:12px;line-height:15px;color:#000;letter-spacing:-0.364px;">08/01/2016 12:10</span>
<span class="t" id="r4a" style="left:1235.10px;top:573.83px;font-size:12px;line-height:15px;color:#0066cc;letter-spacing:-0.112px;">View  technical d...</span>
</body></html>
